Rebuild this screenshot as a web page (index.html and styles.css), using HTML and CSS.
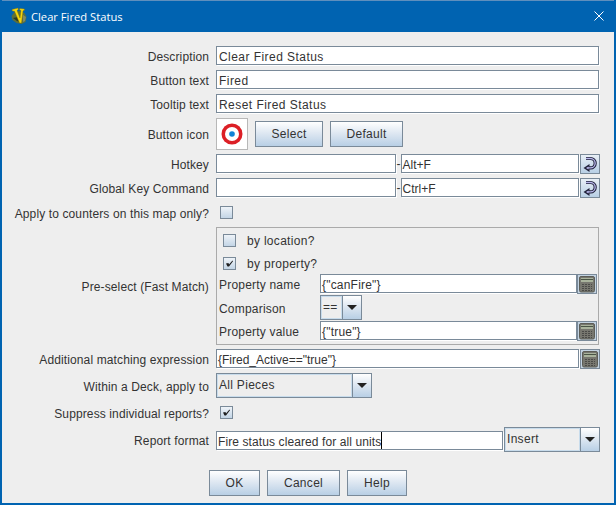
FILE: index.html
```html
<!DOCTYPE html>
<html lang="en">
<head>
  <meta charset="UTF-8">
  <title>Clear Fired Status</title>
  <meta name="viewport" content="width=device-width, initial-scale=1.0">
  <link rel="stylesheet" href="styles.css">
</head>
<body>
  <svg class="defs" width="0" height="0">
    <symbol id="calc" viewBox="0 0 16 18">
      <rect x="0.5" y="1.5" width="15" height="15.500" rx="1.500" fill="#77776f" stroke="#5d5e57"/>
      <rect x="2" y="3" width="12" height="4" fill="#a9b39c"/>
      <rect x="2" y="4" width="12" height="1" fill="#4a5546"/>
      <path d="M3 9.500h10M3 11.500h10M3 13.500h10M3 15.500h10" stroke="#4b4b48" stroke-width="1" stroke-dasharray="2 1"/>
    </symbol>
    <symbol id="keycmd" viewBox="0 0 18 18">
      <path d="M5 3.500h4.500a4.700 4.700 0 0 1 0 9.400H7" fill="none" stroke="#20203a" stroke-width="3.200"/>
      <path d="M8.500 9L2.500 13l6 4z" fill="#20203a"/>
      <path d="M5 3.500h4.500a4.700 4.700 0 0 1 0 9.400H7" fill="none" stroke="#b9b9ec" stroke-width="1.300"/>
      <path d="M7.500 11.500L5 13l2.500 1.500z" fill="#b9b9ec"/>
    </symbol>
    <symbol id="tick" viewBox="0 0 11 11">
      <path d="M2 5.500L4.500 5 5 6.500 8.500 2.500 9 3.200 5 8.500H3.500z" fill="#1d1d1d"/>
    </symbol>
  </svg>

  <div class="window">
    <div class="titlebar">
      <svg class="app-icon" width="16" height="18" viewBox="0 0 16 18">
        <path d="M0.500 9l3-4 5-1 5 2 2 4-1 5-4 2-5-1-4-3z" fill="#5b6f3c"/>
        <path d="M2 11l4 3 3 1-2-5z" fill="#2d3a22"/>
        <path d="M12 8l3 2-1 4-2 1z" fill="#7f8a68"/>
        <path d="M1 2.500L7 1l.3 1.500L6 3.500 9 11l1-7.500-1.500-.5.3-1.500 4.700.5-.3 1.500-1.200.3L10.500 16H8.500L3.500 4.200 1.300 4z" fill="#f6d80e" stroke="#7a6a08" stroke-width="0.400"/>
      </svg>
      <span class="title">Clear Fired Status</span>
      <svg class="close" width="10" height="10" viewBox="0 0 10 10">
        <path d="M0.500 0.500l9 9M9.500 0.500l-9 9" stroke="#fff" stroke-width="1" fill="none"/>
      </svg>
    </div>

    <div class="content">
      <div class="form">
        <div class="lbl">Description</div>
        <div class="ctl"><div class="field full">Clear Fired Status</div></div>

        <div class="lbl">Button text</div>
        <div class="ctl"><div class="field full">Fired</div></div>

        <div class="lbl">Tooltip text</div>
        <div class="ctl"><div class="field full">Reset Fired Status</div></div>

        <div class="lbl">Button icon</div>
        <div class="ctl icon-row">
          <div class="icon-box">
            <svg width="22" height="22" viewBox="0 0 22 22">
              <circle cx="11" cy="11" r="10.500" fill="#dc1f26"/>
              <circle cx="11" cy="11" r="7" fill="#fff"/>
              <circle cx="11" cy="11" r="2.800" fill="#1083d6"/>
            </svg>
          </div>
          <button class="btn btn-select">Select</button>
          <button class="btn btn-default">Default</button>
        </div>

        <div class="lbl">Hotkey</div>
        <div class="ctl">
          <div class="field grow"></div>
          <span class="dash">-</span>
          <div class="field grow key">Alt+F</div>
          <div class="tool"><svg width="18" height="18"><use href="#keycmd"/></svg></div>
        </div>

        <div class="lbl">Global Key Command</div>
        <div class="ctl">
          <div class="field grow"></div>
          <span class="dash">-</span>
          <div class="field grow key">Ctrl+F</div>
          <div class="tool"><svg width="18" height="18"><use href="#keycmd"/></svg></div>
        </div>

        <div class="lbl">Apply to counters on this map only?</div>
        <div class="ctl check-row"><span class="check"></span></div>

        <div class="lbl">Pre-select (Fast Match)</div>
        <div class="panel">
          <div class="panel-check"><span class="check"></span><span>by location?</span></div>
          <div class="panel-check second"><span class="check"><svg width="11" height="11"><use href="#tick"/></svg></span><span>by property?</span></div>
          <div class="sub">
            <div class="sub-lbl">Property name</div>
            <div class="ctl">
              <div class="field grow tight">{"canFire"}</div>
              <div class="tool calc"><svg width="16" height="18"><use href="#calc"/></svg></div>
            </div>
            <div class="sub-lbl">Comparison</div>
            <div class="ctl">
              <div class="combo combo-op"><span class="combo-text">==</span><span class="arrow"></span></div>
            </div>
            <div class="sub-lbl">Property value</div>
            <div class="ctl">
              <div class="field grow tight">{"true"}</div>
              <div class="tool calc"><svg width="16" height="18"><use href="#calc"/></svg></div>
            </div>
          </div>
        </div>

        <div class="lbl">Additional matching expression</div>
        <div class="ctl">
          <div class="field grow expr">{Fired_Active=="true"}</div>
          <div class="tool calc"><svg width="16" height="18"><use href="#calc"/></svg></div>
        </div>

        <div class="lbl">Within a Deck, apply to</div>
        <div class="ctl">
          <div class="combo combo-deck"><span class="combo-text">All Pieces</span><span class="arrow"></span></div>
        </div>

        <div class="lbl">Suppress individual reports?</div>
        <div class="ctl check-row"><span class="check"><svg width="11" height="11"><use href="#tick"/></svg></span></div>

        <div class="lbl">Report format</div>
        <div class="ctl report">
          <div class="field grow plain">Fire status cleared for all units<span class="caret"></span></div>
          <div class="combo combo-insert"><span class="combo-text">Insert</span><span class="arrow"></span></div>
        </div>
      </div>

      <div class="actions">
        <button class="btn btn-ok">OK</button>
        <button class="btn btn-cancel">Cancel</button>
        <button class="btn btn-help">Help</button>
      </div>
    </div>
  </div>
</body>
</html>
```

FILE: styles.css
```css
html, body {
  margin: 0;
  height: 100%;
}

body {
  font-family: "Liberation Sans", Arial, sans-serif;
  font-size: 12px;
  color: #333;
  overflow: hidden;
}

.defs {
  display: block;
  height: 0;
}

.window {
  box-sizing: border-box;
  width: 616px;
  height: 505px;
  background: #eeeeee;
  border: 2px solid #0063b1;
  border-top: 0;
  display: flex;
  flex-direction: column;
}

.titlebar {
  height: 32px;
  flex: none;
  background: #0063b1;
  border-top: 1px solid #5f8fbd;
  box-sizing: border-box;
  color: #fff;
  display: flex;
  align-items: center;
  padding-left: 9px;
  padding-right: 10px;
}

.app-icon {
  margin-right: 4px;
  margin-top: -2px;
}

.title {
  font-family: "Open Sans", sans-serif;
  font-size: 11.2px;
  flex: 1;
}

.close {
  margin-top: -1px;
}

.content {
  padding: 14px 14px 0 0;
}

.form {
  display: grid;
  grid-template-columns: 207px 384px;
  column-gap: 7px;
  row-gap: 4px;
  grid-template-rows: 20px 20px 20px 32px 20px 20px 21px 118px 20px 25px 21px 25px;
}

.lbl {
  text-align: right;
  align-self: center;
  padding-top: 2px;
  letter-spacing: 0.12px;
  white-space: nowrap;
}

.ctl {
  display: flex;
  align-items: flex-start;
  min-width: 0;
}

.field {
  box-sizing: border-box;
  height: 19px;
  line-height: 20px;
  padding-left: 2px;
  background: #fff;
  border: 1px solid #7a8a99;
  box-shadow: 1px 1px 0 #fff;
  letter-spacing: 0.45px;
  white-space: nowrap;
  overflow: hidden;
}

.field.full {
  width: 383px;
}

.field.grow {
  flex: 1;
  margin-right: 1px;
  min-width: 0;
}

.field.key {
  letter-spacing: 0;
  padding-left: 1px;
}

.field.plain {
  letter-spacing: 0.1px;
  padding-left: 1px;
}

.field.expr {
  letter-spacing: 0;
  padding-left: 1px;
}

.field.tight {
  padding-left: 1px;
  letter-spacing: 0.2px;
  margin-right: 0;
}

.caret {
  display: inline-block;
  width: 1px;
  height: 17px;
  background: #000;
  vertical-align: top;
}

.dash {
  width: 4px;
  line-height: 20px;
  text-align: center;
}

.icon-row {
  align-items: center;
}

.icon-box {
  box-sizing: border-box;
  width: 32px;
  height: 32px;
  border: 1px solid #b8b8b8;
  background: #fff;
  display: flex;
  align-items: center;
  justify-content: center;
  margin-right: 7px;
}

.btn {
  box-sizing: border-box;
  height: 26px;
  padding: 0;
  font: inherit;
  color: #333;
  letter-spacing: 0.3px;
  border: 1px solid #7a8a99;
  background: linear-gradient(#ffffff, #dfe8f2 45%, #b8cfe5);
}

.btn-select { width: 68px; margin-right: 7px; }
.btn-default { width: 73px; }

.tool {
  box-sizing: border-box;
  flex: none;
  width: 20px;
  height: 20px;
  border: 1px solid #7a8a99;
  background: linear-gradient(#e8eff6, #b8cfe5);
  display: flex;
  align-items: center;
  justify-content: center;
}

.tool.calc {
  background: #c3d3e2;
}

.check-row {
  align-items: center;
  padding-left: 4px;
}

.check {
  box-sizing: border-box;
  display: inline-block;
  flex: none;
  width: 13px;
  height: 13px;
  border: 1px solid #7a8a99;
  background: linear-gradient(#eef3f8, #c3d5e6);
  overflow: hidden;
}

.check svg {
  display: block;
}

.panel {
  box-sizing: border-box;
  width: 383px;
  height: 118px;
  border: 1px solid #aaaaaa;
  padding: 1px 0 0 6px;
}

.panel-check {
  height: 22px;
  display: flex;
  align-items: center;
  gap: 11px;
  letter-spacing: 0.3px;
}

.panel-check span:last-child {
  padding-top: 1px;
}

.panel-check.second {
  margin-top: 1px;
}

.sub {
  display: grid;
  grid-template-columns: 101px 277px;
  grid-template-rows: 20px 25px 20px;
  margin-left: -4px;
  row-gap: 1px;
}

.sub-lbl {
  align-self: center;
  padding-top: 2px;
  letter-spacing: 0.2px;
}

.combo {
  box-sizing: border-box;
  display: flex;
  height: 25px;
  border: 1px solid #7a8a99;
  background: #eeeeee;
}

.combo-text {
  box-sizing: border-box;
  flex: 1;
  min-width: 0;
  border: 1px solid #c8dcec;
  padding-left: 1px;
  line-height: 21px;
  letter-spacing: 0.3px;
  white-space: nowrap;
}

.arrow {
  flex: none;
  width: 19px;
  border-left: 1px solid #7a8a99;
  box-sizing: border-box;
  background: linear-gradient(#ffffff, #dfe8f2 45%, #b8cfe5);
  position: relative;
}

.arrow::after {
  content: "";
  position: absolute;
  left: 4px;
  top: 9px;
  border-left: 5px solid transparent;
  border-right: 5px solid transparent;
  border-top: 5px solid #222;
}

.combo-op { width: 42px; }
.combo-deck { width: 156px; }
.combo-insert { width: 96px; flex: none; }

.report {
  align-items: center;
}

.report .field {
  margin-right: 1px;
  margin-top: 1px;
}

.actions {
  display: flex;
  gap: 7px;
  margin-top: 18px;
  margin-left: 207px;
}

.btn-ok { width: 51px; }
.btn-cancel { width: 73px; }
.btn-help { width: 60px; }
```
